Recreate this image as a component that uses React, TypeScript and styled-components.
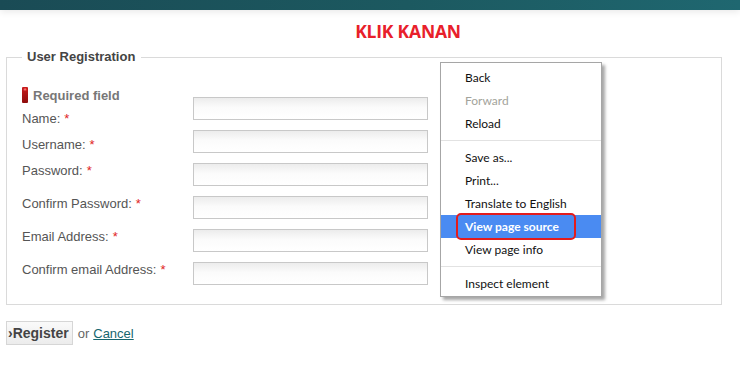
import { FC } from 'react';
import styled, { createGlobalStyle } from 'styled-components';

const GlobalStyle = createGlobalStyle`
  html, body {
    margin: 0;
    padding: 0;
    background: #fff;
    font-family: 'Liberation Sans', Arial, sans-serif;
  }
`;

const Page = styled.div`
  position: relative;
  width: 740px;
  height: 372px;
  overflow: hidden;
`;

const TopBar = styled.div`
  height: 10px;
  background: linear-gradient(90deg, #1a4b55 0%, #1c5960 55%, #1f6770 100%);
  box-shadow: 0 2px 7px rgba(0, 0, 0, 0.09);
`;

const Title = styled.h1`
  margin: 9px 0 0;
  padding-left: 76px;
  text-align: center;
  font-family: 'Open Sans', sans-serif;
  font-size: 17.5px;
  font-weight: 700;
  line-height: 24px;
  letter-spacing: -0.2px;
  color: #e8202a;
`;

const Fieldset = styled.fieldset`
  margin: 6px 18px 0 6px;
  padding: 22px 15px 19px;
  border: 1px solid #dadada;
  min-inline-size: 0;
`;

const Legend = styled.legend`
  margin-left: 0;
  padding: 0 6px 0 5px;
  font-size: 13px;
  font-weight: 700;
  line-height: 16px;
  color: #444;
`;

const FormGrid = styled.div`
  display: grid;
  grid-template-columns: 171px 235px;
  align-items: start;
`;

const LabelColumn = styled.div`
  display: flex;
  flex-direction: column;
`;

const RequiredNote = styled.div`
  display: flex;
  align-items: center;
  gap: 5px;
  height: 16px;
  font-size: 13px;
  font-weight: 700;
  color: #777;
`;

const RequiredMark = styled.span`
  width: 6px;
  height: 16px;
  border-radius: 1px;
  background: linear-gradient(180deg, #c81c1c, #8e0d0d);
  color: #ff7777;
  font-size: 8px;
  line-height: 8px;
  text-align: center;
`;

const FieldLabel = styled.label<{ $tall?: boolean }>`
  margin-top: ${({ $tall }) => ($tall ? '17px' : '10px')};
  height: 16px;
  font-size: 13px;
  line-height: 16px;
  color: #555;

  &:first-of-type {
    margin-top: 8px;
  }
`;

const Star = styled.span`
  margin-left: 4px;
  color: #e02424;
`;

const InputColumn = styled.div`
  display: flex;
  flex-direction: column;
  gap: 10px;
  margin-top: 10px;
`;

const TextInput = styled.input`
  box-sizing: border-box;
  width: 235px;
  height: 23px;
  border: 1px solid #c8c8c8;
  background: linear-gradient(180deg, #ececec 0%, #fbfbfb 45%, #fff 100%);
  outline: none;
`;

const Actions = styled.div`
  display: flex;
  align-items: center;
  gap: 5px;
  margin: 16px 0 0 6px;
  font-size: 13px;
  color: #666;
`;

const RegisterButton = styled.button`
  box-sizing: border-box;
  height: 24px;
  padding: 0 3px 0 1px;
  border: 1px solid #d6d6d6;
  background: linear-gradient(180deg, #fafafa, #ececec);
  font-family: 'Liberation Sans', Arial, sans-serif;
  font-size: 14px;
  font-weight: 700;
  color: #444;
`;

const CancelLink = styled.a`
  margin-left: -1px;
  color: #17666e;
  text-decoration: underline;
  font-size: 13px;
`;

const Menu = styled.div`
  position: absolute;
  top: 62px;
  left: 440px;
  box-sizing: border-box;
  width: 162px;
  padding: 3px 0 1px;
  border: 1px solid #a6a6a6;
  background: #fff;
  box-shadow: 3px 3px 3px rgba(0, 0, 0, 0.35);
  font-family: Lato, 'Noto Sans', sans-serif;
  font-size: 12px;
`;

const MenuItem = styled.div<{ $disabled?: boolean; $active?: boolean }>`
  position: relative;
  height: 23px;
  padding-left: 24px;
  line-height: 23px;
  color: ${({ $disabled, $active }) => ($active ? '#fff' : $disabled ? '#a3a39b' : '#111')};
  background: ${({ $active }) => ($active ? '#4a8bf2' : 'transparent')};
  font-weight: ${({ $active }) => ($active ? 700 : 400)};
`;

const MenuSeparator = styled.div`
  height: 1px;
  margin: 5px 0;
  background: #e2e2e2;
`;

const Callout = styled.span`
  position: absolute;
  top: -2px;
  left: 15px;
  width: 120px;
  height: 27px;
  box-sizing: border-box;
  border: 2px solid #e41c1c;
  border-radius: 5px;
`;

const fields = [
  { label: 'Name:', tall: false },
  { label: 'Username:', tall: false },
  { label: 'Password:', tall: false },
  { label: 'Confirm Password:', tall: true },
  { label: 'Email Address:', tall: true },
  { label: 'Confirm email Address:', tall: true },
];

const ContextMenu: FC = () => (
  <Menu>
    <MenuItem>Back</MenuItem>
    <MenuItem $disabled>Forward</MenuItem>
    <MenuItem>Reload</MenuItem>
    <MenuSeparator />
    <MenuItem>Save as...</MenuItem>
    <MenuItem>Print...</MenuItem>
    <MenuItem>Translate to English</MenuItem>
    <MenuItem $active>
      View page source
      <Callout />
    </MenuItem>
    <MenuItem>View page info</MenuItem>
    <MenuSeparator />
    <MenuItem>Inspect element</MenuItem>
  </Menu>
);

const App: FC = () => (
  <Page>
    <GlobalStyle />
    <TopBar />
    <Title>KLIK KANAN</Title>
    <Fieldset>
      <Legend>User Registration</Legend>
      <FormGrid>
        <LabelColumn>
          <RequiredNote>
            <RequiredMark>*</RequiredMark>
            Required field
          </RequiredNote>
          {fields.map((f) => (
            <FieldLabel key={f.label} $tall={f.tall}>
              {f.label}
              <Star>*</Star>
            </FieldLabel>
          ))}
        </LabelColumn>
        <InputColumn>
          {fields.map((f) => (
            <TextInput key={f.label} type="text" />
          ))}
        </InputColumn>
      </FormGrid>
    </Fieldset>
    <Actions>
      <RegisterButton>›Register</RegisterButton>
      <span>or</span>
      <CancelLink href="#">Cancel</CancelLink>
    </Actions>
    <ContextMenu />
  </Page>
);

export default App;
